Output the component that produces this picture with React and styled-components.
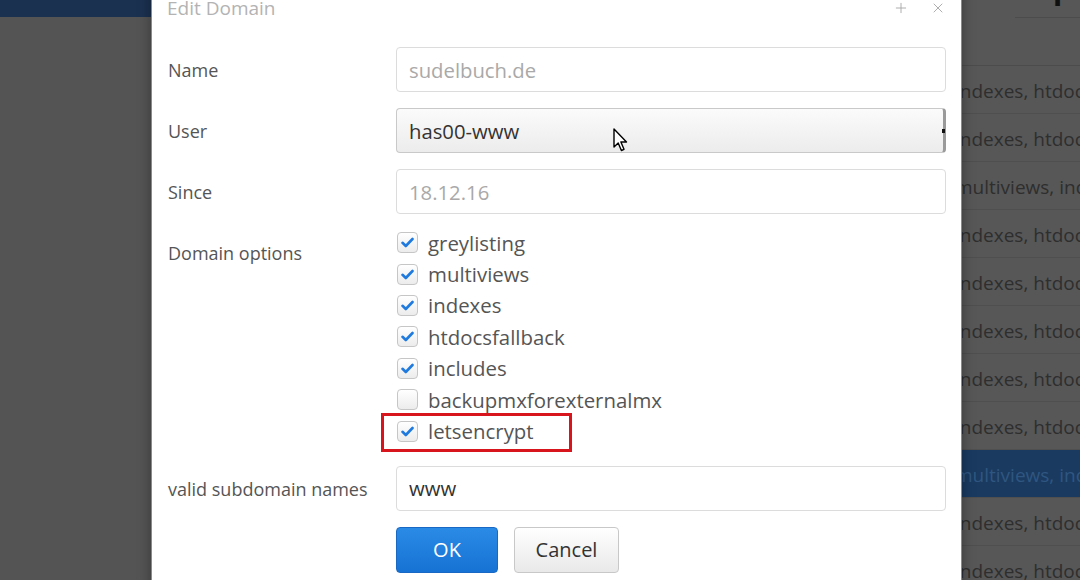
import React from "react";
import styled, { createGlobalStyle } from "styled-components";
import { Plus, X } from "lucide-react";

const GlobalStyle = createGlobalStyle`
  html, body {
    margin: 0;
    padding: 0;
    overflow: hidden;
  }
  body {
    font-family: "Open Sans", "Liberation Sans", sans-serif;
  }
`;

const Page = styled.div`
  position: relative;
  width: 1080px;
  height: 580px;
  display: flex;
  overflow: hidden;
  background: #575757;
`;

const Sidebar = styled.aside`
  width: 152px;
  flex-shrink: 0;
  background: #545454;
  display: flex;
  flex-direction: column;
`;

const SidebarTop = styled.div`
  height: 17px;
  background: #1b3150;
`;

const Main = styled.main`
  flex: 1;
  display: flex;
  flex-direction: column;
  min-width: 0;
`;

const Header = styled.header`
  height: 66px;
  flex-shrink: 0;
  display: flex;
  flex-direction: column;
  border-bottom: 1px solid #4c4c4c;
  box-sizing: border-box;
`;

const HeaderTop = styled.div`
  height: 17px;
  display: flex;
  justify-content: flex-end;
  overflow: hidden;
`;

const Heading = styled.h1`
  margin: -41px 3px 0 0;
  font-size: 40px;
  line-height: 44px;
  font-weight: 600;
  color: #101010;
  white-space: nowrap;
`;

const HeaderRule = styled.div`
  margin-left: auto;
  width: 65px;
  border-top: 1px solid #4c4c4c;
`;

const Row = styled.div`
  height: 48px;
  flex-shrink: 0;
  padding-top: 3px;
  display: grid;
  grid-template-columns: 803px 1fr;
  align-items: center;
  border-bottom: 1px solid #4f4f4f;
  box-sizing: border-box;
  background: ${(p) => (p.$selected ? "#1a3a60" : "transparent")};
  color: ${(p) => (p.$selected ? "#2f5680" : "#2e2e2e")};
  font-size: 19px;
  white-space: nowrap;
  overflow: hidden;
`;

const Dialog = styled.div`
  position: absolute;
  left: 151px;
  top: -20px;
  width: 811px;
  height: 640px;
  box-sizing: border-box;
  background: #fff;
  border: 1px solid #8a8a8a;
  border-top: none;
  box-shadow: 0 0 12px rgba(0, 0, 0, 0.35);
  padding: 15px 15px 0 16px;
`;

const DialogHeader = styled.div`
  display: flex;
  align-items: center;
  height: 26px;
  margin-bottom: 26px;
`;

const DialogTitle = styled.h2`
  flex: 1;
  margin: -1px 0 0 -1px;
  font-size: 19px;
  font-weight: 400;
  color: #b3b3b3;
`;

const HeaderButton = styled.span`
  display: flex;
  color: #a8a8a8;
  margin-left: 21px;
`;

const Form = styled.div`
  display: grid;
  grid-template-columns: 228px 550px;
  row-gap: 16px;
`;

const Label = styled.div`
  padding-top: 11px;
  line-height: 24px;
  font-size: 18px;
  color: #555;
`;

const Input = styled.div`
  height: 45px;
  box-sizing: border-box;
  border: 1px solid #dcdcdc;
  border-radius: 4px;
  padding: 0 12px;
  display: flex;
  align-items: center;
  font-size: 20.3px;
  color: ${(p) => (p.$disabled ? "#a9a9a9" : "#333")};
  background: #fff;
`;

const Select = styled(Input)`
  position: relative;
  background: linear-gradient(#fbfbfb, #ececec);
  border-color: #c9c9c9;
  border-right: 3px solid #9a9a9a;
  color: #333;

  &::after {
    content: "";
    position: absolute;
    right: -2px;
    top: 20px;
    width: 3px;
    height: 4px;
    background: #111;
  }
`;

const Cursor = styled.svg`
  position: absolute;
  left: 216px;
  top: 19px;
`;

const OptionList = styled.div`
  margin: -3px 0 3px;
  display: flex;
  flex-direction: column;
`;

const Option = styled.label`
  position: relative;
  height: 31.4px;
  display: flex;
  align-items: center;
  gap: 10px;
  font-size: 20.4px;
  color: #555;

  ${(p) =>
    p.$marked &&
    `
    &::after {
      content: "";
      position: absolute;
      left: -15px;
      top: -2px;
      width: 191px;
      height: 39px;
      box-sizing: border-box;
      border: 3px solid #d8141c;
    }
  `}
`;

const Box = styled.span`
  width: 21px;
  height: 21px;
  box-sizing: border-box;
  border: 1px solid #c6c6c6;
  border-radius: 4px;
  background: linear-gradient(#ffffff, #ececec);
  display: flex;
  align-items: center;
  justify-content: center;
  margin-left: 1px;
`;

const Buttons = styled.div`
  display: flex;
  gap: 16px;
`;

const Button = styled.button`
  height: 46px;
  min-width: ${(p) => (p.$primary ? "102px" : "105px")};
  border-radius: 4px;
  font-family: inherit;
  font-size: 20px;
  border: 1px solid ${(p) => (p.$primary ? "#1868c4" : "#c8c8c8")};
  color: ${(p) => (p.$primary ? "#fff" : "#333")};
  background: ${(p) =>
    p.$primary
      ? "linear-gradient(#2a8be6, #1672d4)"
      : "linear-gradient(#ffffff, #e9e9e9)"};
`;

const rows = [
  "indexes, htdocsfallback, includes",
  "indexes, htdocsfallback, includes",
  "multiviews, indexes, htdocsfallback",
  "indexes, htdocsfallback, includes",
  "indexes, htdocsfallback, includes",
  "indexes, htdocsfallback, includes",
  "indexes, htdocsfallback, includes",
  "indexes, htdocsfallback, includes",
  "multiviews, indexes, htdocsfallback",
  "indexes, htdocsfallback, includes",
  "indexes, htdocsfallback, includes",
];

const options = [
  { name: "greylisting", checked: true },
  { name: "multiviews", checked: true },
  { name: "indexes", checked: true },
  { name: "htdocsfallback", checked: true },
  { name: "includes", checked: true },
  { name: "backupmxforexternalmx", checked: false },
  { name: "letsencrypt", checked: true, marked: true },
];

const Check = () => (
  <svg width="13" height="11" viewBox="0 0 13 11">
    <path d="M1.5 5.8 L4.8 9 L11.5 2" fill="none" stroke="#1f7ae0" strokeWidth="2.6" strokeLinecap="round" strokeLinejoin="round" />
  </svg>
);

const App = () => {
  return (
    <Page>
      <GlobalStyle />
      <Sidebar>
        <SidebarTop />
      </Sidebar>
      <Main>
        <Header>
          <HeaderTop>
            <Heading>Domain Setup</Heading>
          </HeaderTop>
          <HeaderRule />
        </Header>
        {rows.map((r, i) => (
          <Row key={i} $selected={i === 8}>
            <div />
            <div>{r}</div>
          </Row>
        ))}
      </Main>

      <Dialog>
        <DialogHeader>
          <DialogTitle>Edit Domain</DialogTitle>
          <HeaderButton><Plus size={16} strokeWidth={1.4} /></HeaderButton>
          <HeaderButton><X size={16} strokeWidth={1.4} /></HeaderButton>
        </DialogHeader>
        <Form>
          <Label>Name</Label>
          <Input $disabled>sudelbuch.de</Input>

          <Label>User</Label>
          <Select>
            has00-www
            <Cursor width="16" height="26" viewBox="0 0 16 26">
              <path d="M1 1 L1 19 L5.2 15 L8.4 22.5 L11 21.3 L7.9 14 L13.5 14 Z" fill="#fff" stroke="#000" strokeWidth="1.4" strokeLinejoin="round" />
            </Cursor>
          </Select>

          <Label>Since</Label>
          <Input $disabled>18.12.16</Input>

          <Label>Domain options</Label>
          <OptionList>
            {options.map((o) => (
              <Option key={o.name} $marked={o.marked}>
                <Box>{o.checked && <Check />}</Box>
                {o.name}
              </Option>
            ))}
          </OptionList>

          <Label>valid subdomain names</Label>
          <Input>www</Input>

          <div />
          <Buttons>
            <Button $primary>OK</Button>
            <Button>Cancel</Button>
          </Buttons>
        </Form>
      </Dialog>
    </Page>
  );
};

export default App;
